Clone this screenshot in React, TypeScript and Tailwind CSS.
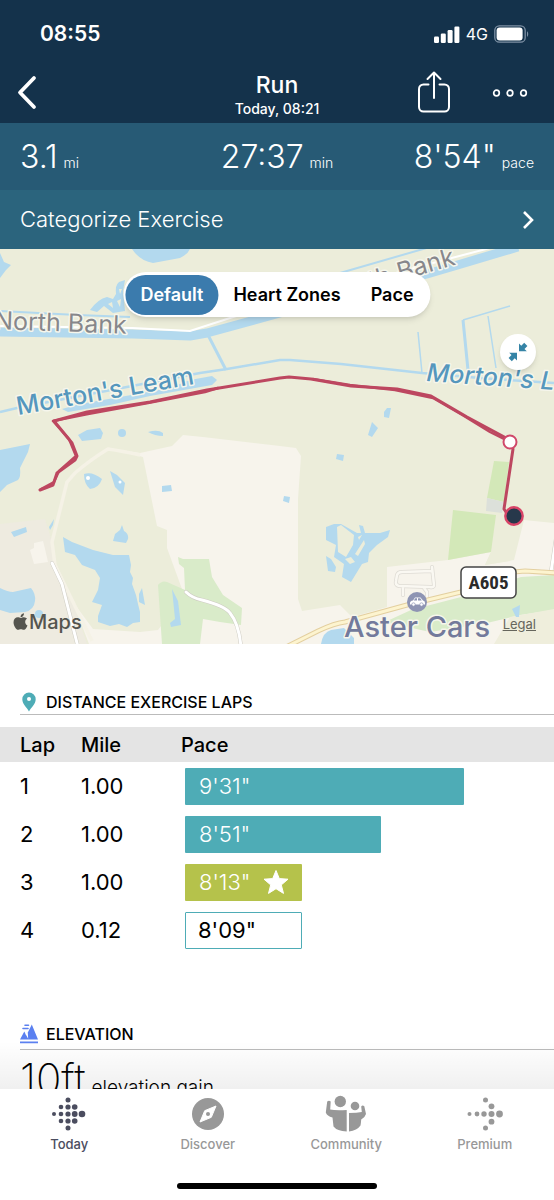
import React, { useState } from 'react';
import { FaApple } from 'react-icons/fa';

interface Lap {
  lap: number;
  mile: string;
  pace: string;
  width: number;
  kind: 'normal' | 'best' | 'partial';
}

const laps: Lap[] = [
  { lap: 1, mile: '1.00', pace: `9'31"`, width: 80, kind: 'normal' },
  { lap: 2, mile: '1.00', pace: `8'51"`, width: 56.3, kind: 'normal' },
  { lap: 3, mile: '1.00', pace: `8'13"`, width: 33.6, kind: 'best' },
  { lap: 4, mile: '0.12', pace: `8'09"`, width: 33.6, kind: 'partial' }
];

const barStyles: Record<Lap['kind'], string> = {
  normal: 'bg-[#4eacb6] text-white',
  best: 'bg-[#b5c24b] text-white',
  partial: 'border border-[#4eacb6] bg-white text-black'
};

const StatusBar: React.FC = () => (
  <div className="flex h-16 items-center justify-between pt-1 pl-10 pr-6">
    <span className="text-[21px] font-semibold">08:55</span>
    <div className="flex items-center gap-1">
      <svg width="26" height="17" viewBox="0 0 26 17" fill="currentColor" aria-hidden="true">
        <rect x="0" y="10.5" width="5" height="6.5" rx="1.2" />
        <rect x="6.8" y="7.5" width="5" height="9.5" rx="1.2" />
        <rect x="13.6" y="4" width="5" height="13" rx="1.2" />
        <rect x="20.4" y="0.5" width="5" height="16.5" rx="1.2" />
      </svg>
      <span className="px-0.5 text-base">4G</span>
      <svg width="36" height="18" viewBox="0 0 36 18" aria-hidden="true">
        <rect x="0.8" y="0.8" width="30.4" height="16.4" rx="4.5" fill="none" stroke="#7d90a4" strokeWidth="1.3" />
        <rect x="2.6" y="2.6" width="26" height="12.8" rx="3" fill="#fff" />
        <path d="M33 6.2c1.6.6 1.6 5 0 5.6z" fill="#7d90a4" />
      </svg>
    </div>
  </div>
);

const TitleBar: React.FC = () => (
  <div className="grid h-[59px] grid-cols-[1fr_auto_1fr] items-center px-4 pb-1">
    <button type="button" aria-label="Back" className="justify-self-start">
      <svg width="24" height="36" viewBox="0 0 24 36" fill="none" stroke="currentColor" strokeWidth="3.8" strokeLinecap="round" strokeLinejoin="round">
        <path d="M18 4 4 18.5 18 33" />
      </svg>
    </button>
    <div className="pt-1.5 text-center">
      <h1 className="text-[23px] leading-7 font-medium">Run</h1>
      <p className="text-sm leading-5 font-medium">Today, 08:21</p>
    </div>
    <div className="flex items-center gap-10 justify-self-end pr-2.5">
      <button type="button" aria-label="Share">
        <svg width="36" height="42" viewBox="0 0 36 42" fill="none" stroke="currentColor" strokeWidth="2" strokeLinecap="round" strokeLinejoin="round">
          <path d="M12.5 13.500H7.5A4.5 4.5 0 0 0 3 18v18A4.5 4.5 0 0 0 7.5 40.500h21A4.5 4.5 0 0 0 33 36V18a4.5 4.5 0 0 0-4.5-4.5h-5" />
          <path d="M18 27V1.500M11.5 8 18 1.500 24.500 8" />
        </svg>
      </button>
      <button type="button" aria-label="More">
        <svg width="36" height="12" viewBox="0 0 36 12" fill="none" stroke="currentColor" strokeWidth="1.7">
          <circle cx="4.500" cy="7" r="2.800" />
          <circle cx="18" cy="7" r="2.800" />
          <circle cx="31.500" cy="7" r="2.800" />
        </svg>
      </button>
    </div>
  </div>
);

const Stat: React.FC<{ value: string; unit: string }> = ({ value, unit }) => (
  <div className="flex items-baseline gap-1.5 last:justify-self-end">
    <span className="text-[32px] font-light">{value}</span>
    <span className="text-sm font-light">{unit}</span>
  </div>
);

const MapDrawing: React.FC = () => (
  <svg className="block h-[395px] w-full" viewBox="0 0 554 395" preserveAspectRatio="xMidYMid slice" role="img" aria-label="Route map">
    <rect width="554" height="395" fill="#ecedda" />

    {/* land */}
    <path d="M0 275 45 270 52 293 55 316 73 353 87 395H0z" fill="#eeebe0" />
    <g fill="#f7f4ec">
      <path d="M108 199 140 204 172 197 183 186 203 188 280 197 296 199 301 207 298 250 298 350 302 362 340 356 352 368 387 358 387 318 448 311 491 303 485 316 510 312 524 271 554 274V395H89L73 353 93 380 140 383 158 381 182 350V340L167 299V281L157 277 143 208z" />
      <path d="M30 301 34 299 34 294 43 292 45 300 48 313 34 315z" />
    </g>
    <path d="M485 316 491 303 496 264 524 271 514 311z" fill="#ecedda" />
    <path d="M140 206Q122 202 108 200Q90 211 75 224L67 233 58 269 52 293 55 316 73 353 92 392" fill="none" stroke="#f5f2e6" strokeWidth="3.500" />
    <g fill="#d9ebc9">
      <path d="M178 308 183 310H209L212 328 223 346 242 359 241 376 220 373 203 370 200 395H162L158 336Q162 331 167 333L185 341 184 319 179 315z" />
      <path d="M385 373 411 361 461 348 521 328 554 326V361L520 366 487 374 430 383z" />
    </g>
    <path d="M494 395 510 368 554 360V395z" fill="#efeedc" />
    <g fill="#d3e8b8">
      <path d="M494 212 509 213 504 253 487 249z" />
      <path d="M453 261 496 266 491 303 448 311z" />
    </g>
    <path d="M487 249 504 253 502 264 486 262z" fill="#dce0da" />

    {/* waterways */}
    <g fill="none" stroke="#b3d9ee" strokeLinejoin="round">
      <path d="M0 83 133 85 190 87 207 84 280 64 427 25 461 15 518-2" strokeWidth="9" />
      <path d="M0 62 77 66 130 68M340 24 430-2" strokeWidth="2" />
      <path d="M0 163 17 159 200 124 227 120 280 111H290L341 115 422 124 480 129 554 134" strokeWidth="2.500" />
      <path d="M208 86 226 121M468 121 463 71" strokeWidth="3" />
      <path d="M463 71 510 57M488 67 496 119M418 83 422 124" strokeWidth="1.500" />
    </g>
    <path d="M0 77 132 79 190 82 233 68 444 11 490-1" fill="none" stroke="#fff" strokeWidth="2" />

    {/* ponds */}
    <g fill="#b3d9ee">
      <path d="M0 4 4 13 11 16 6 21 0 29zM132 0Q140 12 153 14L180 9Q188 5 190 0z" />
      <path fillRule="evenodd" d="M90 61Q98 50 107 48L113 50 116 45Q115 36 119 33L125 31 123 42 125 62 113 64 104 57 97 63zM119 40 122 40 120 45zM108 55 112 53 113 59zM117 52 121 50 120 58z" />
      <path d="M62 160 80 155 120 148 170 139 190 131 212 127 217 131 212 136 195 139 150 147 110 156 68 163z" />
      <path d="M78 186 87 181 100 179 103 184 101 190 82 192z" />
      <circle cx="122" cy="184" r="4" />
      <path d="M148 183Q158 180 163 184V187Q155 187 148 183z" />
      <path d="M0 201 15 198 30 195 28 203 20 219Q21 228 18 231L7 236 0 243z" />
      <path d="M84 225Q92 222 102 230Q99 239 90 240Q84 235 84 225zM110 222 117 226 125 234 123 246 115 238z" />
      <path d="M162 237 171 236 172 242 162 243zM122 276 124 282Q129 285 128 290L126 294 113 292 115 285 120 281z" />
      <path d="M11 283 26 278 27 283 14 288zM49 278 54 270 53 276 50 281z" />
      <path d="M63 288 72 293 93 301 113 306 129 306 131 316 130 323 133 329 132 335 136 346 138 355 140 363 140 373 133 374 127 378 119 375 110 377 98 373 98 367 102 356 92 353 98 341 100 329 95 321 82 316 75 306 65 303z" />
      <path d="M142 339 145 356 139 353 139 345zM0 339Q8 343 13 343L31 339Q36 345 35 352Q34 361 25 363L10 364 0 361z" />
      <circle cx="39" cy="365" r="4" />
      <path d="M172 340 178 352 181 376 171 378 170 374 175 370z" />
      <path d="M384 163 387 159 391 159 389 169 384 168zM372 173 378 179 372 188 368 186z" />
      <path d="M337 205 344 206 343 212 336 210zM284 247 290 248 289 254 283 252z" />
      <path fillRule="evenodd" d="M326 278 334 275 341 275 357 284 361 284 359 276 363 277 365 284 380 284 390 281 388 288 377 296 369 304 368 313 362 315 351 333 342 328 344 315 334 308 336 296 326 291zM337 278 341 276 354 286 353 296 346 308 338 303zM364 291 355 305 358 307 365 295zM345 310 351 308 355 313 350 315zM358 288 362 286 359 291z" />
      <path d="M326 307 331 310 336 318 335 323 328 322zM321 395Q323 383 331 381L344 379 354 389V395zM512 360 520 356 519 368 516 368z" />
    </g>
    <circle cx="88" cy="229" r="2" fill="#fff" />
    <circle cx="120" cy="233" r="1.500" fill="#fff" />

    {/* roads */}
    <g fill="none" strokeLinecap="round" strokeLinejoin="round">
      <path d="M432 318 434 336Q434 339 430 338L399 337Q395 336 396 332L397 326Q398 323 402 323L432 322M424 339 427 343 427 351M403 339V346" stroke="#dedbd4" strokeWidth="4" />
      <path d="M432 318 434 336Q434 339 430 338L399 337Q395 336 396 332L397 326Q398 323 402 323L432 322M424 339 427 343 427 351M403 339V346" stroke="#faf8f2" strokeWidth="2.500" />
      <path d="M52 314 62 335 78 398M186 343Q192 349 202 351Q225 357 230 364Q239 375 241 398M556 290 551 323" stroke="#cfcdc4" strokeWidth="4" />
      <path d="M52 314 62 335 78 398M186 343Q192 349 202 351Q225 357 230 364Q239 375 241 398M556 290 551 323" stroke="#fff" strokeWidth="3" />
      <path d="M288 397 318 382Q335 374 345 373L407 356 461 343Q490 334 505 326Q515 322 525 322L556 324" stroke="#e3cf9f" strokeWidth="5" />
      <path d="M288 397 318 382Q335 374 345 373L407 356 461 343Q490 334 505 326Q515 322 525 322L556 324" stroke="#fdf4cf" strokeWidth="3" />
    </g>

    {/* place names */}
    <g fontFamily="Inter, sans-serif" fontSize="25" stroke="#f6f6ec" strokeWidth="3" paintOrder="stroke" strokeLinejoin="round">
      <text transform="translate(-6 80) rotate(2)" fill="#87878b">North Bank</text>
      <text transform="translate(329 52) rotate(-16)" fill="#87878b">North Bank</text>
      <text transform="translate(18 166) rotate(-10)" fill="#5597bd" fontWeight="500">Morton's Leam</text>
      <text transform="translate(426 132) rotate(4)" fill="#5597bd" fontWeight="500" fontStyle="italic">Morton's Leam</text>
      <text x="344" y="388" fill="#737a9b" fontSize="29" fontWeight="500">Aster Cars</text>
    </g>
    <circle cx="417" cy="353" r="10" fill="#8e94b3" />
    <path d="M410 354q0-2 3-2.500l2-3h5.500l2.500 3q2 .3 2 2.500v1.500h-15z" fill="#fff" />
    <circle cx="413.500" cy="355.500" r="1.700" fill="#fff" stroke="#8e94b3" strokeWidth=".7" />
    <circle cx="421.500" cy="355.500" r="1.700" fill="#fff" stroke="#8e94b3" strokeWidth=".7" />
    <path d="m413.800 351.500 1.500-2.200h1.700v2.200zM418 349.300h2.200l1.600 2.200H418z" fill="#8e94b3" />
    <rect x="461" y="318" width="55" height="31" rx="5" fill="#fff" stroke="#444" strokeWidth="1.500" />
    <text x="488.500" y="340" textAnchor="middle" fontFamily="'Liberation Sans Narrow', 'Roboto Condensed', Roboto, sans-serif" fontWeight="700" fontSize="19" fill="#2b2b2b">A605</text>

    {/* run route */}
    <g fill="none" stroke="#bd4760" strokeLinejoin="round" strokeLinecap="round">
      <path d="M40 241 53 236 57 224 75 211 77 207 72 194 54 172 87 163 150 153 207 141 280 129 289 128 311 130 351 137 397 140 431 147 467 168 508 190" strokeWidth="3" />
      <path d="M41 240 54 233 59 222 76 207 69 190 53 172 88 165 148 154 205 143 218 139M313 130 350 136 395 141 433 149 464 167 490 183 506 191" strokeWidth="2.500" />
      <path d="M513 200 504 260 508 266" strokeWidth="3" />
    </g>
    <circle cx="510" cy="193" r="6.500" fill="#fff" stroke="#d0486a" strokeWidth="2" />
    <circle cx="514" cy="267" r="8.700" fill="#27384b" stroke="#d84467" strokeWidth="2.400" />

    {/* attribution */}
    <g fill="#55554f">
      <FaApple x="11" y="363" size={19} color="#55554f" />
      <text x="29" y="380" fontFamily="Inter, sans-serif" fontSize="20" fontWeight="500">Maps</text>
    </g>
  </svg>
);

const RouteMap: React.FC = () => {
  const [view, setView] = useState('Default');

  return (
    <section className="relative">
      <MapDrawing />
      <div className="absolute left-1/2 top-[23px] flex h-[45px] -translate-x-1/2 items-center rounded-full bg-white p-0.5 text-lg font-semibold shadow-md">
        {['Default', 'Heart Zones', 'Pace'].map((name) => (
          <button
            key={name}
            type="button"
            onClick={() => setView(name)}
            className={`h-10 rounded-full px-[15px] whitespace-nowrap ${view === name ? 'bg-[#3b7bad] text-white' : 'text-black'}`}
          >
            {name}
          </button>
        ))}
      </div>
      <button type="button" aria-label="Shrink map" className="absolute right-[18px] top-[85px] flex size-9 items-center justify-center rounded-full bg-white text-[#3584a6] shadow-md">
        <svg width="20" height="20" viewBox="0 0 20 20" fill="currentColor">
          <path d="M11 1.500V9.200h7.800l-2.300-2.300 2.900-2.900-3.200-3.200-2.900 2.900z" />
          <path d="M9 18.500V10.800H1.200l2.300 2.300-2.900 2.900 3.200 3.200 2.900-2.900z" />
        </svg>
      </button>
      <a href="#legal" className="absolute right-[18px] bottom-2.5 text-[13px] text-[#66665c] underline">
        Legal
      </a>
    </section>
  );
};

const LapTable: React.FC = () => (
  <table className="w-full table-fixed border-collapse text-left">
    <colgroup>
      <col className="w-[81px]" />
      <col className="w-[100px]" />
      <col />
    </colgroup>
    <thead>
      <tr className="h-[35px] bg-[#e4e4e4] text-xl">
        <th className="pl-5 font-medium">Lap</th>
        <th className="font-medium">Mile</th>
        <th className="font-medium">Pace</th>
      </tr>
    </thead>
    <tbody className="text-[22px]">
      {laps.map((row) => (
        <tr key={row.lap} className="h-12">
          <td className="pl-5">{row.lap}</td>
          <td>{row.mile}</td>
          <td className="pl-1 pr-5">
            <div
              className={`flex h-[37px] items-center gap-3 rounded-[1px] ${barStyles[row.kind]} ${row.kind === 'partial' ? 'pl-3' : 'pl-3.5 font-light'}`}
              style={{ width: `${row.width}%` }}
            >
              {row.pace}
              {row.kind === 'best' && (
                <svg width="26" height="26" viewBox="0 0 26 26" fill="currentColor" stroke="currentColor" strokeLinejoin="round" aria-label="Best lap">
                  <path d="M13 1.500 16.300 9.600 25 10.200 18.300 15.900 20.500 24.400 13 19.700 5.500 24.400 7.700 15.900 1 10.200 9.700 9.600z" />
                </svg>
              )}
            </div>
          </td>
        </tr>
      ))}
    </tbody>
  </table>
);

interface Dot {
  x: number;
  y: number;
  r: number;
}

const todayDots: Dot[] = [
  { x: 2, y: 17, r: 2 },
  { x: 9, y: 10, r: 2.3 }, { x: 9, y: 17, r: 2.3 }, { x: 9, y: 24, r: 2.3 },
  { x: 16, y: 3, r: 2.5 }, { x: 16, y: 10, r: 2.6 }, { x: 16, y: 17, r: 2.6 }, { x: 16, y: 24, r: 2.6 }, { x: 16, y: 31, r: 2.5 },
  { x: 22.7, y: 10, r: 2.8 }, { x: 22.7, y: 17, r: 2.9 }, { x: 22.7, y: 24, r: 2.8 },
  { x: 30, y: 17, r: 3.3 }
];

const premiumDots: Dot[] = [
  { x: 2.5, y: 17, r: 2 }, { x: 10, y: 17, r: 2.4 }, { x: 17, y: 17, r: 2.7 },
  { x: 18.5, y: 3, r: 2.5 }, { x: 24.5, y: 9.3, r: 2.9 }, { x: 24.5, y: 17, r: 3 }, { x: 24.5, y: 24.7, r: 2.9 },
  { x: 18.5, y: 31, r: 2.5 }, { x: 32.5, y: 17, r: 3.4 }
];

const DotIcon: React.FC<{ dots: Dot[]; width: number }> = ({ dots, width }) => (
  <svg width={width} height="34" viewBox={`0 0 ${width} 34`} fill="currentColor" aria-hidden="true">
    {dots.map((d) => (
      <circle key={`${d.x}-${d.y}`} cx={d.x} cy={d.y} r={d.r} />
    ))}
  </svg>
);

const tabs = [
  { label: 'Today', icon: <DotIcon dots={todayDots} width={34} /> },
  {
    label: 'Discover',
    icon: (
      <svg width="34" height="34" viewBox="0 0 34 34" aria-hidden="true">
        <circle cx="17" cy="17" r="16" fill="currentColor" />
        <path d="M25 9 20.300 20.300 9 25 13.700 13.700z" fill="#fff" stroke="#fff" strokeLinejoin="round" />
        <circle cx="17" cy="17" r="2" fill="currentColor" />
      </svg>
    )
  },
  {
    label: 'Community',
    icon: (
      <svg width="42" height="38" viewBox="0 0 42 38" fill="currentColor" aria-hidden="true">
        <circle cx="15.300" cy="6.500" r="5.700" />
        <circle cx="30" cy="11" r="4.300" />
        <path d="M2.200 6.500Q4 5 5.700 6.500L5.200 14.500Q10 15.600 21.700 15V36.500Q12 36 8.500 31.500 8 27 7.500 22.500 2 21 .8 17.500z" />
        <path d="M24 18Q32 18 36.800 17L36.200 11.500Q37.500 9.500 39.300 11.200L41 19Q40 22.500 36.200 24.500 36 28 35.500 30.500 32 35.500 24 36.500z" />
      </svg>
    )
  },
  { label: 'Premium', icon: <DotIcon dots={premiumDots} width={36} /> }
];

const TabBar: React.FC = () => (
  <nav className="bg-white">
    <div className="grid h-[94px] grid-cols-4">
      {tabs.map((tab, i) => (
        <a key={tab.label} href={`#${tab.label.toLowerCase()}`} className={`flex flex-col items-center pt-1 ${i === 0 ? 'text-[#4b4d5f]' : 'text-[#989898]'}`}>
          <span className="flex h-[42px] items-center">{tab.icon}</span>
          <span className="text-[13px] font-medium">{tab.label}</span>
        </a>
      ))}
    </div>
    <div className="flex h-[17px] justify-center">
      <div className="h-1.5 w-[36%] rounded-full bg-black" />
    </div>
  </nav>
);

const App: React.FC = () => {
  return (
    <div className="flex h-screen flex-col bg-white font-['Inter',sans-serif] text-black">
      <header className="shrink-0 bg-[#14324b] text-white">
        <StatusBar />
        <TitleBar />
      </header>

      <main className="relative min-h-0 flex-1 overflow-hidden">
        <div className="grid h-[67px] grid-cols-[1fr_auto_1fr] items-center bg-[#275a75] px-5 text-white">
          <Stat value="3.1" unit="mi" />
          <Stat value="27:37" unit="min" />
          <Stat value={`8'54"`} unit="pace" />
        </div>
        <button type="button" className="flex h-[59px] w-full items-center justify-between bg-[#2b647d] px-5 text-[22px] font-light text-white">
          Categorize Exercise
          <svg width="12" height="20" viewBox="0 0 12 20" fill="none" stroke="currentColor" strokeWidth="2.600" aria-hidden="true">
            <path d="m2 2 8 8-8 8" />
          </svg>
        </button>

        <RouteMap />

        <section className="pt-[46px]">
          <div className="mb-3 ml-5 flex h-[25px] items-center gap-2 border-b border-[#bbb]">
            <svg width="18" height="20" viewBox="0 0 18 20" aria-hidden="true">
              <path d="M9 .5A6.700 6.700 0 0 0 2.300 7.200C2.300 12 7 15.500 9 19.500c2-4 6.700-7.500 6.700-12.300A6.700 6.700 0 0 0 9 .5z" fill="#4eacb6" />
              <circle cx="9" cy="7" r="2" fill="#fff" />
            </svg>
            <h2 className="text-base font-medium">DISTANCE EXERCISE LAPS</h2>
          </div>
          <LapTable />
        </section>

        <section className="pt-16">
          <div className="ml-5 flex h-8 items-center gap-2 border-b border-[#bbb]">
            <svg width="18" height="20" viewBox="0 0 18 20" fill="#5b80f0" aria-hidden="true">
              <path d="M0 15.500 4.300 7.500 6.300 11.500 11.800.500 18 15.500zM0 17.500h18v1.700H0z" />
              <path d="M5.400 9.700 8.200 14.800 7.800 9z" fill="#fff" />
              <path d="M5 1.300h3.500M3 4.500h5" stroke="#5b80f0" strokeWidth="1.600" strokeLinecap="round" />
            </svg>
            <h2 className="text-base font-medium">ELEVATION</h2>
          </div>
          <div className="flex items-baseline gap-1.5 px-5">
            <span className="text-[42px] leading-[58px] font-extralight">10ft</span>
            <span className="text-[19px] font-light">elevation gain</span>
          </div>
        </section>
        <div className="pointer-events-none absolute inset-x-0 bottom-0 h-12 bg-linear-to-t from-black/6 to-transparent" />
      </main>

      <TabBar />
    </div>
  );
};

export default App;
